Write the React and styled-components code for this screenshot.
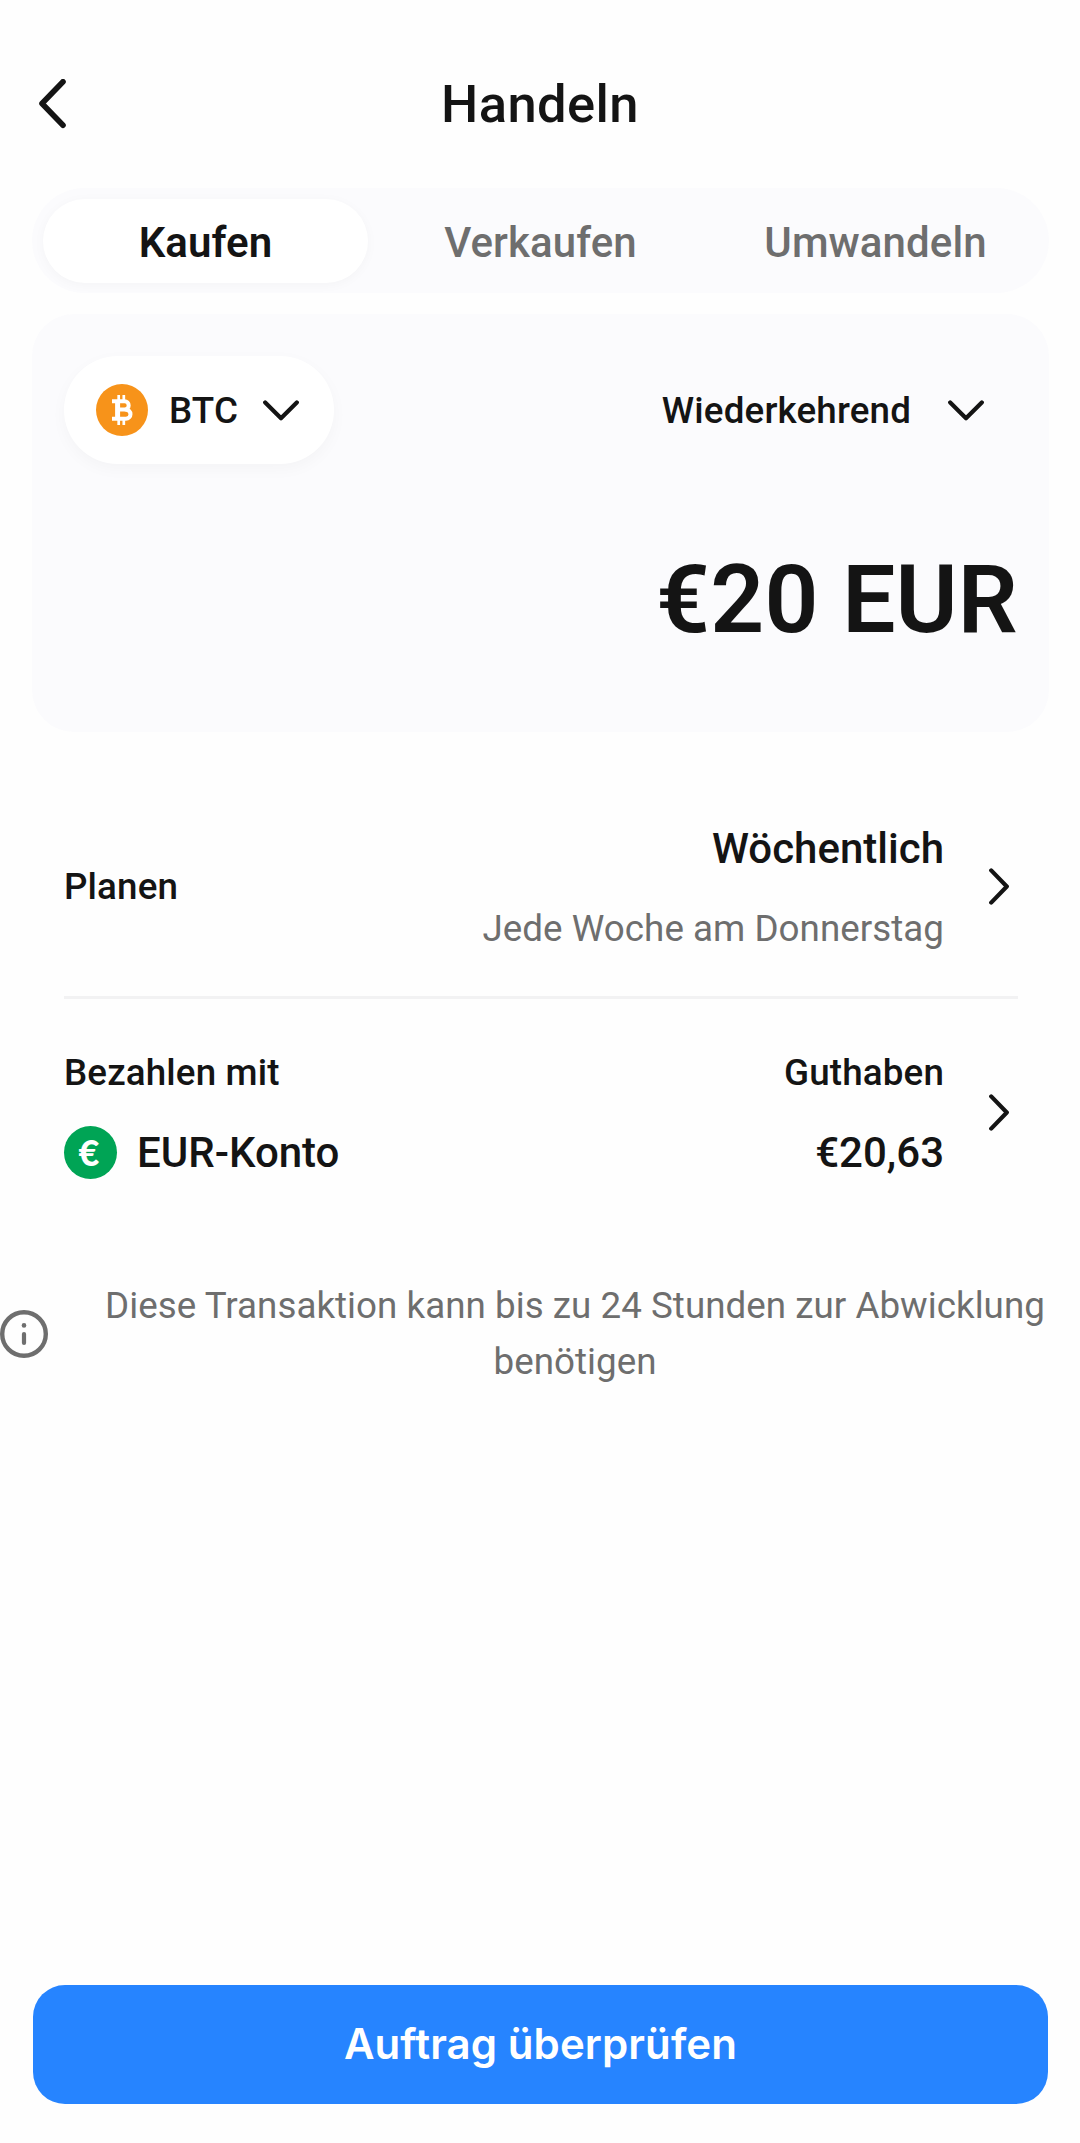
import React from "react";
import styled, { createGlobalStyle } from "styled-components";

const GlobalStyle = createGlobalStyle`
    body {
        margin: 0;
        background-color: #fefefe;
    }
`;

const Screen = styled.div`
    display: flex;
    flex-direction: column;
    box-sizing: border-box;
    height: 2143px;
    padding-bottom: 39px;
    color: #141414;
    font-family: Roboto, "Liberation Sans", sans-serif;
    font-size: 36.75px;
    font-weight: 500;
    line-height: 56px;
    letter-spacing: 0.15px;

    svg {
        display: block;
        flex: none;
    }
`;

const Header = styled.header`
    display: grid;
    grid-template-columns: 1fr auto 1fr;
    align-items: center;
    height: 188px;
    box-sizing: border-box;
    padding: 20px 36px 0;
`;

const Title = styled.h1`
    margin: 0;
    font-size: 52.5px;
    font-weight: 500;
    line-height: 60px;
    letter-spacing: 0.4px;
`;

const Tabs = styled.nav`
    display: grid;
    grid-template-columns: repeat(3, 1fr);
    column-gap: 10px;
    box-sizing: border-box;
    height: 105px;
    margin: 0 31px 21px 32px;
    padding: 11px 11px 10px;
    border-radius: 53px;
    background-color: #fbfbfd;
`;

const Tab = styled.button`
    border: 0;
    padding: 3px 0 0;
    border-radius: 42px;
    font-family: inherit;
    font-size: 42px;
    font-weight: ${(props) => (props.$active ? 600 : 500)};
    line-height: 50px;
    letter-spacing: 0.1px;
    color: ${(props) => (props.$active ? "#141414" : "#6e6e6e")};
    background-color: ${(props) => (props.$active ? "#fff" : "transparent")};
    box-shadow: ${(props) => (props.$active ? "0 2px 12px rgba(0, 0, 0, 0.03)" : "none")};
`;

const AmountCard = styled.section`
    box-sizing: border-box;
    height: 418px;
    margin: 0 31px 0 32px;
    padding: 42px 32px;
    border-radius: 42px;
    background-color: #fbfbfd;
`;

const Selectors = styled.div`
    display: flex;
    justify-content: space-between;
    height: 108px;
`;

const SelectLabel = styled.span`
    padding-top: 1px;
`;

const CoinSelect = styled.div`
    display: flex;
    align-items: center;
    box-sizing: border-box;
    width: 270px;
    padding-left: 32px;
    border-radius: 54px;
    background-color: #fff;
    box-shadow: 0 5px 16px rgba(0, 0, 0, 0.03);

    ${SelectLabel} {
        width: 94px;
        padding-left: 21px;
    }
`;

const FrequencySelect = styled.div`
    display: flex;
    align-items: center;
    gap: 37px;
    padding-right: 33px;
`;

const Coin = styled.div`
    display: flex;
    align-items: center;
    justify-content: center;
    flex: none;
    width: ${(props) => props.$size}px;
    height: ${(props) => props.$size}px;
    border-radius: 50%;
    color: #fff;
    background-color: ${(props) => props.$color};
`;

const EuroSign = styled.span`
    margin-right: 3px;
    font-family: Lato, sans-serif;
    font-size: 36px;
    font-weight: 900;
    line-height: 52px;
`;

const Amount = styled.div`
    margin: 80px -1px 0 0;
    font-size: 94.5px;
    font-weight: 600;
    line-height: 112px;
    text-align: right;
`;

const Options = styled.section`
    margin: 89px 62px 0 64px;
`;

const Option = styled.div`
    display: flex;
    align-items: center;
    justify-content: space-between;
    box-sizing: border-box;
    height: ${(props) => props.$height}px;
    padding-right: 9px;
    padding-bottom: ${(props) => props.$bottom}px;
    border-bottom: ${(props) => (props.$divider ? "3px solid #f2f2f3" : "0")};
`;

const Column = styled.div`
    display: flex;
    flex-direction: column;
    gap: 24px;
    padding-top: ${(props) => props.$top || 0}px;
    ${(props) => props.$end && "align-items: flex-end; margin-left: auto; margin-right: 45px;"}
`;

const Value = styled.div`
    display: flex;
    align-items: center;
    gap: 20px;
    font-size: 42px;
    letter-spacing: 0;

    ${Coin} {
        margin-bottom: 1px;
    }
`;

const Hint = styled.div`
    color: #6e6e6e;
    font-weight: 400;
    letter-spacing: 0.03px;
`;

const Notice = styled.div`
    display: flex;
    align-items: center;
    margin-top: 50px;
    color: #6e6e6e;
    font-weight: 400;
    letter-spacing: 0.03px;

    p {
        flex: 1;
        margin: 0 32px 0 54px;
        text-align: center;
    }
`;

const ReviewButton = styled.button`
    height: 119px;
    margin: auto 32px 0 33px;
    padding: 0 0 2px;
    border: 0;
    border-radius: 32px;
    color: #fff;
    background-color: #2684ff;
    font-family: Inter, sans-serif;
    font-size: 42px;
    font-weight: 600;
    letter-spacing: 0.1px;
`;

const Chevron = ({ width, height, points, stroke = 4.2 }) => (
    <svg width={width} height={height} fill="none" stroke="#141414" strokeWidth={stroke} strokeLinecap="round" strokeLinejoin="round">
        <polyline points={points} />
    </svg>
);

const ChevronDown = () => <Chevron width={36} height={21} points="2.2,2.4 18,18.2 33.8,2.4" />;
const ChevronRight = () => <Chevron width={20} height={37} points="2.2,2.4 17.8,18.5 2.2,34.6" />;
const BackIcon = () => <Chevron width={30} height={50} points="27,2.7 6,24.5 27,46.3" stroke={5.6} />;

const BitcoinIcon = () => (
    <svg width="21" height="30" fill="none" stroke="#fff">
        <path d="M6.7 0v5M11.8 0v5M6.7 25v5M11.8 25v5" strokeWidth="2.7" />
        <path d="M5.6 5v20" strokeWidth="5" />
        <path d="M0 6.3h12.6a4.1 4.1 0 0 1 0 8.2H6M12.8 14.7h1.2a4.5 4.5 0 0 1 0 9H0" strokeWidth="4" />
    </svg>
);

const InfoIcon = () => (
    <svg width="48" height="48" fill="none" stroke="#6e6e6e">
        <circle cx="24" cy="24" r="21.8" strokeWidth="4.4" />
        <circle cx="24" cy="15.4" r="2.3" fill="#6e6e6e" stroke="none" />
        <path d="M24 24v9" strokeWidth="4.2" strokeLinecap="round" />
    </svg>
);

const tabs = ["Kaufen", "Verkaufen", "Umwandeln"];

const App = () => (
    <Screen>
        <GlobalStyle />
        <Header>
            <BackIcon />
            <Title>Handeln</Title>
        </Header>
        <Tabs>
            {tabs.map((tab, index) => (
                <Tab key={tab} $active={index === 0}>{tab}</Tab>
            ))}
        </Tabs>
        <AmountCard>
            <Selectors>
                <CoinSelect>
                    <Coin $size={52} $color="#f7931a"><BitcoinIcon /></Coin>
                    <SelectLabel>BTC</SelectLabel>
                    <ChevronDown />
                </CoinSelect>
                <FrequencySelect>
                    <SelectLabel>Wiederkehrend</SelectLabel>
                    <ChevronDown />
                </FrequencySelect>
            </Selectors>
            <Amount>€20 EUR</Amount>
        </AmountCard>
        <Options>
            <Option $height={178} $bottom={44} $divider>
                <div>Planen</div>
                <Column $end $top={4}>
                    <Value>Wöchentlich</Value>
                    <Hint>Jede Woche am Donnerstag</Hint>
                </Column>
                <ChevronRight />
            </Option>
            <Option $height={229} $bottom={2}>
                <Column>
                    <div>Bezahlen mit</div>
                    <Value>
                        <Coin $size={53} $color="#00a455"><EuroSign>€</EuroSign></Coin>
                        EUR-Konto
                    </Value>
                </Column>
                <Column $end>
                    <div>Guthaben</div>
                    <Value>€20,63</Value>
                </Column>
                <ChevronRight />
            </Option>
        </Options>
        <Notice>
            <InfoIcon />
            <p>Diese Transaktion kann bis zu 24 Stunden zur Abwicklung benötigen</p>
        </Notice>
        <ReviewButton>Auftrag überprüfen</ReviewButton>
    </Screen>
);

export default App;
